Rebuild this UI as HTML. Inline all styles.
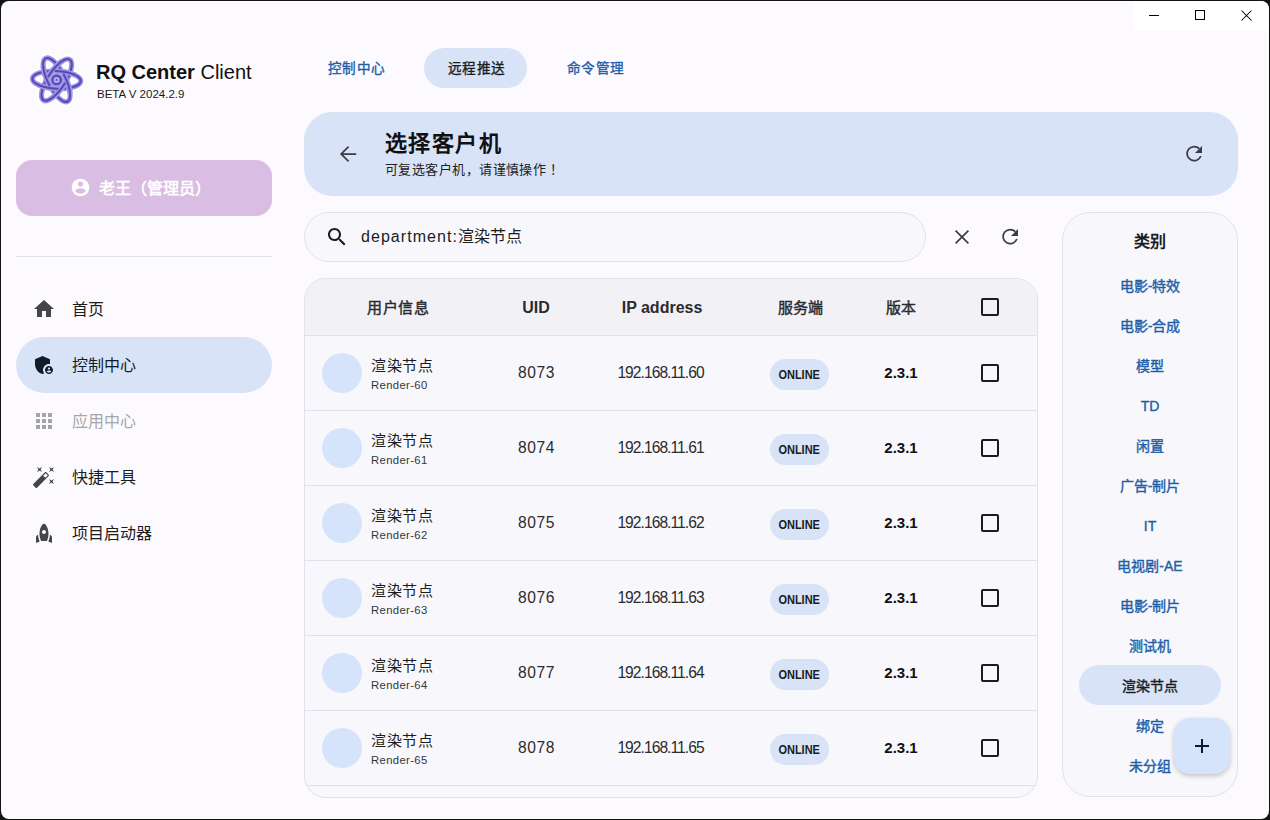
<!DOCTYPE html>
<html lang="zh-CN"><head><meta charset="utf-8">
<style>
*{margin:0;padding:0;box-sizing:border-box}
html,body{width:1270px;height:820px;overflow:hidden;background:#141414}
body{font-family:"Liberation Sans",sans-serif;color:#1a1c1e;position:relative;text-spacing-trim:space-all}
.win{position:absolute;left:1px;top:1px;width:1268px;height:818px;background:#fdfaff;border-radius:8px;overflow:hidden}
.a{position:absolute}
.t{position:absolute;white-space:nowrap;line-height:1}
svg{display:block}
.cap{position:absolute;top:0;left:1132px;width:136px;height:29px;background:#fff}
.navpill{position:absolute;left:15px;width:256px;height:56px;border-radius:28px;background:#d8e3f8}
.navtxt{position:absolute;left:71px;font-size:16px;color:#1a1c1e}
.ico{position:absolute;width:24px;height:24px}
.card{position:absolute;left:303px;top:277px;width:734px;height:520px;border:1px solid #dfe2eb;border-radius:22px;background:#f8f8fc;overflow:hidden}
.hdr{position:absolute;left:0;top:0;width:100%;height:57px;background:#f2f2f6;border-bottom:1px solid #dfe2eb}
.row{position:absolute;left:0;width:100%;height:75px;border-bottom:1px solid #dfe2eb}
.hc{position:absolute;top:20px;font-size:16px;font-weight:bold;color:#2a2c30;transform:translateX(-50%)}
.av{position:absolute;left:17px;top:17px;width:40px;height:40px;border-radius:50%;background:#d5e3fb}
.nm{position:absolute;left:66px;top:22px;font-size:15px;letter-spacing:0.5px;color:#1a1c1e}
.sub{position:absolute;left:66px;top:44px;font-size:11.3px;letter-spacing:.35px;color:#33363a}
.c{position:absolute;transform:translateX(-50%);font-size:15px;color:#2a2c30}
.badge{position:absolute;left:465px;top:23px;width:59px;height:31px;border-radius:15.5px;background:#d8e3f8;font-size:12.8px;font-weight:bold;text-align:center;line-height:32px;color:#1a1c1e}
.badge span{display:inline-block;transform:scaleX(.86)}
.ver{font-weight:bold;color:#111}
.cb{position:absolute;left:676px;top:28px;width:18px;height:18px;border:2px solid #1a1c1e;border-radius:2px}
.cat{position:absolute;left:1061px;top:211px;width:176px;height:585px;border:1px solid #dfe2eb;border-radius:28px;background:#f8f8fc}
.ci{position:absolute;left:0;width:100%;text-align:center;font-size:14px;font-weight:normal;-webkit-text-stroke:.4px currentColor;color:#1f5ea8}
</style></head><body>
<div class="win">
  <!-- caption buttons -->
  <div class="cap"></div>
  <div class="a" style="left:1148px;top:14px;width:10px;height:1px;background:#000"></div>
  <div class="a" style="left:1194px;top:9px;width:10px;height:10px;border:1px solid #000"></div>
  <svg class="a" style="left:1240px;top:9px" width="11" height="11" viewBox="0 0 11 11"><path d="M0.5 0.5L10.5 10.5M10.5 0.5L0.5 10.5" stroke="#000" stroke-width="1.05"/></svg>

  <!-- logo -->
  <svg class="a" style="left:27px;top:52px" width="58" height="56" viewBox="0 0 58 56"><g fill="none"><g stroke="#fff" stroke-width="9" opacity=".85"><ellipse cx="28.6" cy="26.9" rx="24.2" ry="8.8" transform="rotate(3 28.6 26.9)"/><ellipse cx="28.6" cy="26.9" rx="24.2" ry="8.8" transform="rotate(63 28.6 26.9)"/><ellipse cx="28.6" cy="26.9" rx="24.2" ry="8.8" transform="rotate(123 28.6 26.9)"/></g><g stroke="#a197dd" stroke-width="5.2"><ellipse cx="28.6" cy="26.9" rx="24.2" ry="8.8" transform="rotate(3 28.6 26.9)"/></g><g stroke="#5548c0" stroke-width="2.1"><ellipse cx="28.6" cy="26.9" rx="24.2" ry="8.8" transform="rotate(3 28.6 26.9)"/></g><g stroke="#a197dd" stroke-width="5.2"><ellipse cx="28.6" cy="26.9" rx="24.2" ry="8.8" transform="rotate(63 28.6 26.9)"/></g><g stroke="#5548c0" stroke-width="2.1"><ellipse cx="28.6" cy="26.9" rx="24.2" ry="8.8" transform="rotate(63 28.6 26.9)"/></g><g stroke="#a197dd" stroke-width="5.2"><ellipse cx="28.6" cy="26.9" rx="24.2" ry="8.8" transform="rotate(123 28.6 26.9)"/></g><g stroke="#5548c0" stroke-width="2.1"><ellipse cx="28.6" cy="26.9" rx="24.2" ry="8.8" transform="rotate(123 28.6 26.9)"/></g><path stroke="#a197dd" stroke-width="5.2" stroke-linecap="butt" d="M38.99 28.57 L39.17 29.02 L39.34 29.47 L39.51 29.92 L39.67 30.37 L39.83 30.81 L39.98 31.26 L40.13 31.70 L40.27 32.14 L40.41 32.58 L40.54 33.02 L40.67 33.46 L40.79 33.89 L40.91 34.32 L41.02 34.74 L41.13 35.16 L41.23 35.58 L41.32 36.00 L41.42 36.41 L41.50 36.81 L41.58 37.22 L41.65 37.61 L41.72 38.01 L41.78 38.40 L41.84 38.78 L41.89 39.16 L41.94 39.53 L41.98 39.90 L42.01 40.26 L42.04 40.62 M30.45 35.77 L29.95 35.76 L29.45 35.74 L28.95 35.73 L28.45 35.70 L27.95 35.68 L27.45 35.65 L26.96 35.62 L26.46 35.58 L25.96 35.54 L25.46 35.49 L24.97 35.45 L24.47 35.39 L23.98 35.34 L23.49 35.28 L23.00 35.22 L22.52 35.15 L22.04 35.08 L21.56 35.01 L21.08 34.93 L20.61 34.85 L20.14 34.77 L19.67 34.68 L19.21 34.59 L18.75 34.50 L18.29 34.40 L17.84 34.30 L17.40 34.20 L16.96 34.09 L16.52 33.98 M18.21 25.23 L18.03 24.78 L17.86 24.33 L17.69 23.88 L17.53 23.43 L17.37 22.99 L17.22 22.54 L17.07 22.10 L16.93 21.66 L16.79 21.22 L16.66 20.78 L16.53 20.34 L16.41 19.91 L16.29 19.48 L16.18 19.06 L16.07 18.64 L15.97 18.22 L15.88 17.80 L15.78 17.39 L15.70 16.99 L15.62 16.58 L15.55 16.19 L15.48 15.79 L15.42 15.40 L15.36 15.02 L15.31 14.64 L15.26 14.27 L15.22 13.90 L15.19 13.54 L15.16 13.18 M26.75 18.03 L27.25 18.04 L27.75 18.06 L28.25 18.07 L28.75 18.10 L29.25 18.12 L29.75 18.15 L30.24 18.18 L30.74 18.22 L31.24 18.26 L31.74 18.31 L32.23 18.35 L32.73 18.41 L33.22 18.46 L33.71 18.52 L34.20 18.58 L34.68 18.65 L35.16 18.72 L35.64 18.79 L36.12 18.87 L36.59 18.95 L37.06 19.03 L37.53 19.12 L37.99 19.21 L38.45 19.30 L38.91 19.40 L39.36 19.50 L39.80 19.60 L40.24 19.71 L40.68 19.82 M37.17 29.79 L36.91 30.22 L36.65 30.65 L36.38 31.07 L36.11 31.49 L35.84 31.91 L35.56 32.33 L35.28 32.74 L35.00 33.16 L34.72 33.57 L34.43 33.98 L34.14 34.38 L33.85 34.78 L33.55 35.18 L33.26 35.57 L32.96 35.96 L32.66 36.35 L32.36 36.73 L32.05 37.11 L31.75 37.48 L31.44 37.85 L31.14 38.22 L30.83 38.58 L30.52 38.93 L30.21 39.28 L29.90 39.63 L29.58 39.97 L29.27 40.30 L28.96 40.63 L28.65 40.95 M21.92 35.06 L21.44 34.99 L20.97 34.91 L20.50 34.83 L20.03 34.75 L19.56 34.66 L19.10 34.57 L18.64 34.48 L18.19 34.38 L17.74 34.28 L17.29 34.17 L16.85 34.07 L16.42 33.96 L15.99 33.84 L15.57 33.73 L15.15 33.61 L14.74 33.49 L14.33 33.36 L13.93 33.23 L13.53 33.10 L13.15 32.97 L12.77 32.84 L12.39 32.70 L12.02 32.56 L11.66 32.42 L11.31 32.27 L10.96 32.12 L10.63 31.97 L10.30 31.82 L9.97 31.67 M20.03 24.01 L20.29 23.58 L20.55 23.15 L20.82 22.73 L21.09 22.31 L21.36 21.89 L21.64 21.47 L21.92 21.06 L22.20 20.64 L22.48 20.23 L22.77 19.82 L23.06 19.42 L23.35 19.02 L23.65 18.62 L23.94 18.23 L24.24 17.84 L24.54 17.45 L24.84 17.07 L25.15 16.69 L25.45 16.32 L25.76 15.95 L26.06 15.58 L26.37 15.22 L26.68 14.87 L26.99 14.52 L27.30 14.17 L27.62 13.83 L27.93 13.50 L28.24 13.17 L28.55 12.85 M35.28 18.74 L35.76 18.81 L36.23 18.89 L36.70 18.97 L37.17 19.05 L37.64 19.14 L38.10 19.23 L38.56 19.32 L39.01 19.42 L39.46 19.52 L39.91 19.63 L40.35 19.73 L40.78 19.84 L41.21 19.96 L41.63 20.07 L42.05 20.19 L42.46 20.31 L42.87 20.44 L43.27 20.57 L43.67 20.70 L44.05 20.83 L44.43 20.96 L44.81 21.10 L45.18 21.24 L45.54 21.38 L45.89 21.53 L46.24 21.68 L46.57 21.83 L46.90 21.98 L47.23 22.13 M32.36 36.73 L32.05 37.11 L31.75 37.49 L31.44 37.86 L31.13 38.22 L30.82 38.58 L30.51 38.94 L30.20 39.29 L29.89 39.63 L29.58 39.97 L29.27 40.30 L28.96 40.63 L28.64 40.95 L28.33 41.27 L28.02 41.58 L27.71 41.88 L27.40 42.18 L27.08 42.47 L26.77 42.75 L26.46 43.03 L26.16 43.30 L25.85 43.56 L25.54 43.82 L25.24 44.07 L24.93 44.31 L24.63 44.54 L24.33 44.77 L24.03 44.99 L23.73 45.20 L23.44 45.40 M21.85 32.94 L21.61 32.50 L21.37 32.06 L21.13 31.62 L20.90 31.18 L20.68 30.73 L20.45 30.28 L20.23 29.83 L20.01 29.38 L19.80 28.93 L19.59 28.48 L19.38 28.03 L19.18 27.57 L18.98 27.12 L18.79 26.67 L18.60 26.21 L18.41 25.76 L18.23 25.31 L18.06 24.85 L17.88 24.40 L17.72 23.95 L17.55 23.50 L17.40 23.06 L17.24 22.61 L17.09 22.17 L16.95 21.72 L16.81 21.29 L16.68 20.85 L16.55 20.41 L16.43 19.98 M24.84 17.07 L25.15 16.69 L25.45 16.31 L25.76 15.94 L26.07 15.58 L26.38 15.22 L26.69 14.86 L27.00 14.51 L27.31 14.17 L27.62 13.83 L27.93 13.50 L28.24 13.17 L28.56 12.85 L28.87 12.53 L29.18 12.22 L29.49 11.92 L29.80 11.62 L30.12 11.33 L30.43 11.05 L30.74 10.77 L31.04 10.50 L31.35 10.24 L31.66 9.98 L31.96 9.73 L32.27 9.49 L32.57 9.26 L32.87 9.03 L33.17 8.81 L33.47 8.60 L33.76 8.40 M35.35 20.86 L35.59 21.30 L35.83 21.74 L36.07 22.18 L36.30 22.62 L36.52 23.07 L36.75 23.52 L36.97 23.97 L37.19 24.42 L37.40 24.87 L37.61 25.32 L37.82 25.77 L38.02 26.23 L38.22 26.68 L38.41 27.13 L38.60 27.59 L38.79 28.04 L38.97 28.49 L39.14 28.95 L39.32 29.40 L39.48 29.85 L39.65 30.30 L39.80 30.74 L39.96 31.19 L40.11 31.63 L40.25 32.08 L40.39 32.51 L40.52 32.95 L40.65 33.39 L40.77 33.82"/><path stroke="#5548c0" stroke-width="2.1" d="M38.99 28.57 L39.17 29.02 L39.34 29.47 L39.51 29.92 L39.67 30.37 L39.83 30.81 L39.98 31.26 L40.13 31.70 L40.27 32.14 L40.41 32.58 L40.54 33.02 L40.67 33.46 L40.79 33.89 L40.91 34.32 L41.02 34.74 L41.13 35.16 L41.23 35.58 L41.32 36.00 L41.42 36.41 L41.50 36.81 L41.58 37.22 L41.65 37.61 L41.72 38.01 L41.78 38.40 L41.84 38.78 L41.89 39.16 L41.94 39.53 L41.98 39.90 L42.01 40.26 L42.04 40.62 M30.45 35.77 L29.95 35.76 L29.45 35.74 L28.95 35.73 L28.45 35.70 L27.95 35.68 L27.45 35.65 L26.96 35.62 L26.46 35.58 L25.96 35.54 L25.46 35.49 L24.97 35.45 L24.47 35.39 L23.98 35.34 L23.49 35.28 L23.00 35.22 L22.52 35.15 L22.04 35.08 L21.56 35.01 L21.08 34.93 L20.61 34.85 L20.14 34.77 L19.67 34.68 L19.21 34.59 L18.75 34.50 L18.29 34.40 L17.84 34.30 L17.40 34.20 L16.96 34.09 L16.52 33.98 M18.21 25.23 L18.03 24.78 L17.86 24.33 L17.69 23.88 L17.53 23.43 L17.37 22.99 L17.22 22.54 L17.07 22.10 L16.93 21.66 L16.79 21.22 L16.66 20.78 L16.53 20.34 L16.41 19.91 L16.29 19.48 L16.18 19.06 L16.07 18.64 L15.97 18.22 L15.88 17.80 L15.78 17.39 L15.70 16.99 L15.62 16.58 L15.55 16.19 L15.48 15.79 L15.42 15.40 L15.36 15.02 L15.31 14.64 L15.26 14.27 L15.22 13.90 L15.19 13.54 L15.16 13.18 M26.75 18.03 L27.25 18.04 L27.75 18.06 L28.25 18.07 L28.75 18.10 L29.25 18.12 L29.75 18.15 L30.24 18.18 L30.74 18.22 L31.24 18.26 L31.74 18.31 L32.23 18.35 L32.73 18.41 L33.22 18.46 L33.71 18.52 L34.20 18.58 L34.68 18.65 L35.16 18.72 L35.64 18.79 L36.12 18.87 L36.59 18.95 L37.06 19.03 L37.53 19.12 L37.99 19.21 L38.45 19.30 L38.91 19.40 L39.36 19.50 L39.80 19.60 L40.24 19.71 L40.68 19.82 M37.17 29.79 L36.91 30.22 L36.65 30.65 L36.38 31.07 L36.11 31.49 L35.84 31.91 L35.56 32.33 L35.28 32.74 L35.00 33.16 L34.72 33.57 L34.43 33.98 L34.14 34.38 L33.85 34.78 L33.55 35.18 L33.26 35.57 L32.96 35.96 L32.66 36.35 L32.36 36.73 L32.05 37.11 L31.75 37.48 L31.44 37.85 L31.14 38.22 L30.83 38.58 L30.52 38.93 L30.21 39.28 L29.90 39.63 L29.58 39.97 L29.27 40.30 L28.96 40.63 L28.65 40.95 M21.92 35.06 L21.44 34.99 L20.97 34.91 L20.50 34.83 L20.03 34.75 L19.56 34.66 L19.10 34.57 L18.64 34.48 L18.19 34.38 L17.74 34.28 L17.29 34.17 L16.85 34.07 L16.42 33.96 L15.99 33.84 L15.57 33.73 L15.15 33.61 L14.74 33.49 L14.33 33.36 L13.93 33.23 L13.53 33.10 L13.15 32.97 L12.77 32.84 L12.39 32.70 L12.02 32.56 L11.66 32.42 L11.31 32.27 L10.96 32.12 L10.63 31.97 L10.30 31.82 L9.97 31.67 M20.03 24.01 L20.29 23.58 L20.55 23.15 L20.82 22.73 L21.09 22.31 L21.36 21.89 L21.64 21.47 L21.92 21.06 L22.20 20.64 L22.48 20.23 L22.77 19.82 L23.06 19.42 L23.35 19.02 L23.65 18.62 L23.94 18.23 L24.24 17.84 L24.54 17.45 L24.84 17.07 L25.15 16.69 L25.45 16.32 L25.76 15.95 L26.06 15.58 L26.37 15.22 L26.68 14.87 L26.99 14.52 L27.30 14.17 L27.62 13.83 L27.93 13.50 L28.24 13.17 L28.55 12.85 M35.28 18.74 L35.76 18.81 L36.23 18.89 L36.70 18.97 L37.17 19.05 L37.64 19.14 L38.10 19.23 L38.56 19.32 L39.01 19.42 L39.46 19.52 L39.91 19.63 L40.35 19.73 L40.78 19.84 L41.21 19.96 L41.63 20.07 L42.05 20.19 L42.46 20.31 L42.87 20.44 L43.27 20.57 L43.67 20.70 L44.05 20.83 L44.43 20.96 L44.81 21.10 L45.18 21.24 L45.54 21.38 L45.89 21.53 L46.24 21.68 L46.57 21.83 L46.90 21.98 L47.23 22.13 M32.36 36.73 L32.05 37.11 L31.75 37.49 L31.44 37.86 L31.13 38.22 L30.82 38.58 L30.51 38.94 L30.20 39.29 L29.89 39.63 L29.58 39.97 L29.27 40.30 L28.96 40.63 L28.64 40.95 L28.33 41.27 L28.02 41.58 L27.71 41.88 L27.40 42.18 L27.08 42.47 L26.77 42.75 L26.46 43.03 L26.16 43.30 L25.85 43.56 L25.54 43.82 L25.24 44.07 L24.93 44.31 L24.63 44.54 L24.33 44.77 L24.03 44.99 L23.73 45.20 L23.44 45.40 M21.85 32.94 L21.61 32.50 L21.37 32.06 L21.13 31.62 L20.90 31.18 L20.68 30.73 L20.45 30.28 L20.23 29.83 L20.01 29.38 L19.80 28.93 L19.59 28.48 L19.38 28.03 L19.18 27.57 L18.98 27.12 L18.79 26.67 L18.60 26.21 L18.41 25.76 L18.23 25.31 L18.06 24.85 L17.88 24.40 L17.72 23.95 L17.55 23.50 L17.40 23.06 L17.24 22.61 L17.09 22.17 L16.95 21.72 L16.81 21.29 L16.68 20.85 L16.55 20.41 L16.43 19.98 M24.84 17.07 L25.15 16.69 L25.45 16.31 L25.76 15.94 L26.07 15.58 L26.38 15.22 L26.69 14.86 L27.00 14.51 L27.31 14.17 L27.62 13.83 L27.93 13.50 L28.24 13.17 L28.56 12.85 L28.87 12.53 L29.18 12.22 L29.49 11.92 L29.80 11.62 L30.12 11.33 L30.43 11.05 L30.74 10.77 L31.04 10.50 L31.35 10.24 L31.66 9.98 L31.96 9.73 L32.27 9.49 L32.57 9.26 L32.87 9.03 L33.17 8.81 L33.47 8.60 L33.76 8.40 M35.35 20.86 L35.59 21.30 L35.83 21.74 L36.07 22.18 L36.30 22.62 L36.52 23.07 L36.75 23.52 L36.97 23.97 L37.19 24.42 L37.40 24.87 L37.61 25.32 L37.82 25.77 L38.02 26.23 L38.22 26.68 L38.41 27.13 L38.60 27.59 L38.79 28.04 L38.97 28.49 L39.14 28.95 L39.32 29.40 L39.48 29.85 L39.65 30.30 L39.80 30.74 L39.96 31.19 L40.11 31.63 L40.25 32.08 L40.39 32.51 L40.52 32.95 L40.65 33.39 L40.77 33.82"/><circle cx="28.6" cy="26.9" r="4.3" stroke="#a197dd" stroke-width="4.8"/><circle cx="28.6" cy="26.9" r="4.3" stroke="#5548c0" stroke-width="2.1"/><circle cx="28.6" cy="26.9" r="1.6" fill="#a197dd" stroke="none"/><circle cx="28.6" cy="26.9" r="0.9" fill="#5548c0" stroke="none"/></g></svg>
  <div class="t" style="left:95px;top:61px;font-size:20px;color:#111"><b>RQ Center</b> Client</div>
  <div class="t" style="left:96px;top:88px;font-size:11.5px;color:#1a1a1a">BETA V 2024.2.9</div>

  <!-- user button -->
  <div class="a" style="left:15px;top:159px;width:256px;height:56px;border-radius:16px;background:#d9bde2"></div>
  <svg class="a" style="left:69.4px;top:175.8px" width="21" height="21" viewBox="0 0 24 24"><path fill="#fff" d="M12 2C6.48 2 2 6.48 2 12s4.48 10 10 10 10-4.48 10-10S17.52 2 12 2zm0 3c1.66 0 3 1.34 3 3s-1.34 3-3 3-3-1.34-3-3 1.34-3 3-3zm0 14.2c-2.5 0-4.71-1.28-6-3.22.03-1.99 4-3.08 6-3.08 1.99 0 5.97 1.09 6 3.08-1.29 1.94-3.5 3.22-6 3.22z"/></svg>
  <div class="t" style="left:98px;top:180px;font-size:16px;font-weight:bold;color:#fff">老王（管理员）</div>

  <div class="a" style="left:15px;top:255px;width:256px;height:1px;background:#dfe2eb"></div>

  <!-- nav -->
  <svg class="ico" style="left:31px;top:296px" viewBox="0 0 24 24"><path fill="#43464b" d="M10 20v-6h4v6h5v-8h3L12 3 2 12h3v8z"/></svg>
  <div class="t navtxt" style="top:301px">首页</div>

  <div class="navpill" style="top:336px"></div>
  <svg class="ico" style="left:31px;top:352px" viewBox="0 0 24 24"><path fill="#141c2a" d="M17 11c.34 0 .67.04 1 .09V6.27L10.5 3 3 6.27v4.91c0 4.54 3.2 8.79 7.5 9.82.55-.13 1.08-.32 1.6-.55-.69-.98-1.1-2.17-1.1-3.45 0-3.31 2.69-6 6-6z"/><path fill="#141c2a" d="M17 13c-2.21 0-4 1.790-4 4s1.79 4 4 4 4-1.79 4-4-1.79-4-4-4zm0 1.38c.62 0 1.12.51 1.12 1.12s-.51 1.12-1.12 1.12-1.120-.51-1.12-1.12.5-1.12 1.12-1.12zm0 5.37c-.93 0-1.74-.46-2.24-1.17.05-.72 1.51-1.08 2.24-1.08s2.19.36 2.24 1.08c-.5.71-1.31 1.170-2.24 1.17z"/></svg>
  <div class="t navtxt" style="top:357px;color:#101c2b">控制中心</div>

  <svg class="ico" style="left:31px;top:408px" viewBox="0 0 24 24"><path fill="#a3a3a6" d="M4 8h4V4H4v4zm6 12h4v-4h-4v4zm-6 0h4v-4H4v4zm0-6h4v-4H4v4zm6 0h4v-4h-4v4zm6-10v4h4V4h-4zm-6 4h4V4h-4v4zm6 6h4v-4h-4v4zm0 6h4v-4h-4v4z"/></svg>
  <div class="t navtxt" style="top:413px;color:#a6a6a9">应用中心</div>

  <svg class="ico" style="left:31px;top:464px" viewBox="0 0 24 24"><path fill="#43464b" d="M7.5 5.6L10 7 8.6 4.5 10 2 7.5 3.4 5 2l1.4 2.5L5 7zm12 9.8L17 14l1.4 2.5L17 19l2.5-1.4L22 19l-1.4-2.5L22 14zM22 2l-2.5 1.4L17 2l1.4 2.5L17 7l2.5-1.4L22 7l-1.4-2.5zm-7.63 5.29c-.39-.39-1.020-.39-1.41 0L1.29 18.96c-.39.39-.39 1.02 0 1.41l2.34 2.34c.39.39 1.02.39 1.41 0L16.7 11.05c.39-.39.39-1.02 0-1.41l-2.33-2.35zm-1.03 5.49l-2.12-2.12 2.44-2.44 2.12 2.12-2.44 2.44z"/></svg>
  <div class="t navtxt" style="top:469px">快捷工具</div>

  <svg class="ico" style="left:31px;top:520px" viewBox="0 0 24 24"><path fill="#43464b" d="M12 2.5s4.5 2.04 4.5 10.5c0 2.49-1.04 5.57-1.6 7H9.1c-.56-1.43-1.6-4.51-1.6-7C7.5 4.54 12 2.5 12 2.5zm2 8.5c0-1.1-.9-2-2-2s-2 .9-2 2 .9 2 2 2 2-.9 2-2zm-6.31 9.52c-.48-1.23-1.52-4.17-1.67-6.870l-1.13.75c-.56.38-.89 1-.89 1.67V22l3.69-1.48zM20 22v-5.93c0-.67-.33-1.29-.89-1.66l-1.13-.75c-.15 2.69-1.2 5.64-1.67 6.87L20 22z"/></svg>
  <div class="t navtxt" style="top:525px">项目启动器</div>

  <!-- top tabs -->
  <div class="t" style="left:327px;top:60.5px;font-size:13.6px;letter-spacing:.25px;font-weight:normal;-webkit-text-stroke:.35px currentColor;color:#1f5ea8">控制中心</div>
  <div class="a" style="left:423px;top:47px;width:103px;height:40px;border-radius:20px;background:#d8e3f8"></div>
  <div class="t" style="left:447px;top:60.5px;font-size:13.6px;letter-spacing:.25px;font-weight:normal;-webkit-text-stroke:.35px currentColor;color:#1a1c1e">远程推送</div>
  <div class="t" style="left:566px;top:60.5px;font-size:13.6px;letter-spacing:.25px;font-weight:normal;-webkit-text-stroke:.35px currentColor;color:#1f5ea8">命令管理</div>

  <!-- header card -->
  <div class="a" style="left:303px;top:111px;width:934px;height:84px;border-radius:28px;background:#d8e3f8"></div>
  <svg class="ico" style="left:335px;top:141px" viewBox="0 0 24 24"><path fill="none" stroke="#3a3d42" stroke-width="1.75" d="M20.2 12H5.2M12.6 4.6L5.2 12l7.4 7.4"/></svg>
  <div class="t" style="left:384px;top:132px;font-size:22px;letter-spacing:1.4px;font-weight:bold;color:#111">选择客户机</div>
  <div class="t" style="left:384px;top:162px;font-size:13px;letter-spacing:0.45px;color:#222">可复选客户机，请谨慎操作<span style="margin-left:4px">！</span></div>
  <svg class="ico" style="left:1181px;top:141px" viewBox="0 0 24 24"><path fill="none" stroke="#3a3d42" stroke-width="1.75" d="M17.3 6.7A7.1 7.1 0 1 0 18.85 14"/><path fill="#3a3d42" d="M13 11h7V4z"/></svg>

  <!-- search -->
  <div class="a" style="left:303px;top:211px;width:622px;height:50px;border-radius:25px;border:1px solid #dfe2eb;background:#f8f8fc"></div>
  <svg class="ico" style="left:324px;top:224px" viewBox="0 0 24 24"><path fill="#1a1c1e" d="M15.5 14h-.79l-.28-.27C15.41 12.59 16 11.110 16 9.5 16 5.91 13.09 3 9.5 3S3 5.91 3 9.5 5.91 16 9.5 16c1.61 0 3.09-.59 4.23-1.57l.27.28v.79l5 4.99L20.49 19l-4.99-5zm-6 0C7.01 14 5 11.99 5 9.5S7.01 5 9.5 5 14 7.01 14 9.5 11.99 14 9.5 14z"/></svg>
  <div class="t" style="left:360px;top:228px;font-size:16px;color:#1a1c1e"><span style="letter-spacing:1.05px">department:</span>渲染节点</div>
  <svg class="ico" style="left:949px;top:224px" viewBox="0 0 24 24"><path fill="none" stroke="#3a3d42" stroke-width="1.7" d="M5.6 5.6L18.4 18.4M18.4 5.6L5.6 18.4"/></svg>
  <svg class="ico" style="left:997px;top:224px" viewBox="0 0 24 24"><path fill="none" stroke="#3a3d42" stroke-width="1.75" d="M17.3 6.7A7.1 7.1 0 1 0 18.85 14"/><path fill="#3a3d42" d="M13 11h7V4z"/></svg>

  <!-- table -->
  <div class="card" id="card">
    <div class="hdr">
      <div class="t hc" style="left:93px;top:21px;font-size:15px;font-weight:normal;-webkit-text-stroke:.45px currentColor;letter-spacing:0.5px">用户信息</div>
      <div class="t hc" style="left:231px;top:21px">UID</div>
      <div class="t hc" style="left:357px;top:21px">IP address</div>
      <div class="t hc" style="left:495px;top:21px;font-size:15px;font-weight:normal;-webkit-text-stroke:.45px currentColor;">服务端</div>
      <div class="t hc" style="left:596px;top:21px;font-size:15px;font-weight:normal;-webkit-text-stroke:.45px currentColor;">版本</div>
      <div class="cb" style="top:19px"></div>
    </div>
    <div class="row" style="top:57px">
      <div class="av"></div>
      <div class="t nm">渲染节点</div>
      <div class="t sub">Render-60</div>
      <div class="t c" style="left:231.5px;top:29px;font-size:15.6px;letter-spacing:0.6px">8073</div>
      <div class="t c" style="left:355.5px;top:29.2px;font-size:15.6px;letter-spacing:-0.95px">192.168.11.60</div>
      <div class="badge"><span>ONLINE</span></div>
      <div class="t c ver" style="left:596px;top:29px">2.3.1</div>
      <div class="cb"></div>
    </div>
    <div class="row" style="top:132px">
      <div class="av"></div>
      <div class="t nm">渲染节点</div>
      <div class="t sub">Render-61</div>
      <div class="t c" style="left:231.5px;top:29px;font-size:15.6px;letter-spacing:0.6px">8074</div>
      <div class="t c" style="left:355.5px;top:29.2px;font-size:15.6px;letter-spacing:-0.95px">192.168.11.61</div>
      <div class="badge"><span>ONLINE</span></div>
      <div class="t c ver" style="left:596px;top:29px">2.3.1</div>
      <div class="cb"></div>
    </div>
    <div class="row" style="top:207px">
      <div class="av"></div>
      <div class="t nm">渲染节点</div>
      <div class="t sub">Render-62</div>
      <div class="t c" style="left:231.5px;top:29px;font-size:15.6px;letter-spacing:0.6px">8075</div>
      <div class="t c" style="left:355.5px;top:29.2px;font-size:15.6px;letter-spacing:-0.95px">192.168.11.62</div>
      <div class="badge"><span>ONLINE</span></div>
      <div class="t c ver" style="left:596px;top:29px">2.3.1</div>
      <div class="cb"></div>
    </div>
    <div class="row" style="top:282px">
      <div class="av"></div>
      <div class="t nm">渲染节点</div>
      <div class="t sub">Render-63</div>
      <div class="t c" style="left:231.5px;top:29px;font-size:15.6px;letter-spacing:0.6px">8076</div>
      <div class="t c" style="left:355.5px;top:29.2px;font-size:15.6px;letter-spacing:-0.95px">192.168.11.63</div>
      <div class="badge"><span>ONLINE</span></div>
      <div class="t c ver" style="left:596px;top:29px">2.3.1</div>
      <div class="cb"></div>
    </div>
    <div class="row" style="top:357px">
      <div class="av"></div>
      <div class="t nm">渲染节点</div>
      <div class="t sub">Render-64</div>
      <div class="t c" style="left:231.5px;top:29px;font-size:15.6px;letter-spacing:0.6px">8077</div>
      <div class="t c" style="left:355.5px;top:29.2px;font-size:15.6px;letter-spacing:-0.95px">192.168.11.64</div>
      <div class="badge"><span>ONLINE</span></div>
      <div class="t c ver" style="left:596px;top:29px">2.3.1</div>
      <div class="cb"></div>
    </div>
    <div class="row" style="top:432px">
      <div class="av"></div>
      <div class="t nm">渲染节点</div>
      <div class="t sub">Render-65</div>
      <div class="t c" style="left:231.5px;top:29px;font-size:15.6px;letter-spacing:0.6px">8078</div>
      <div class="t c" style="left:355.5px;top:29.2px;font-size:15.6px;letter-spacing:-0.95px">192.168.11.65</div>
      <div class="badge"><span>ONLINE</span></div>
      <div class="t c ver" style="left:596px;top:29px">2.3.1</div>
      <div class="cb"></div>
    </div>
  </div>

  <!-- categories -->
  <div class="cat">
    <div class="t ci" style="top:21px;font-size:16px;font-weight:bold;-webkit-text-stroke:0;color:#1a1c1e">类别</div>
    <div class="t ci" style="top:66px">电影-特效</div>
    <div class="t ci" style="top:106px">电影-合成</div>
    <div class="t ci" style="top:146px">模型</div>
    <div class="t ci" style="top:186px">TD</div>
    <div class="t ci" style="top:226px">闲置</div>
    <div class="t ci" style="top:266px">广告-制片</div>
    <div class="t ci" style="top:306px">IT</div>
    <div class="t ci" style="top:346px">电视剧-AE</div>
    <div class="t ci" style="top:386px">电影-制片</div>
    <div class="t ci" style="top:426px">测试机</div>
    <div class="a" style="left:16px;top:452px;width:142px;height:40px;border-radius:20px;background:#d8e3f8"></div>
    <div class="t ci" style="top:466px;color:#1a1c1e">渲染节点</div>
    <div class="t ci" style="top:506px">绑定</div>
    <div class="t ci" style="top:546px">未分组</div>
  </div>

  <!-- FAB -->
  <div class="a" style="left:1173px;top:717px;width:56px;height:56px;border-radius:16px;background:#d5e3fb;box-shadow:0 2px 5px rgba(0,0,0,.22)"></div>
  <svg class="ico" style="left:1189px;top:733px" viewBox="0 0 24 24"><path fill="#101c2b" d="M19 13h-6v6h-2v-6H5v-2h6V5h2v6h6v2z"/></svg>
</div>
</body></html>
